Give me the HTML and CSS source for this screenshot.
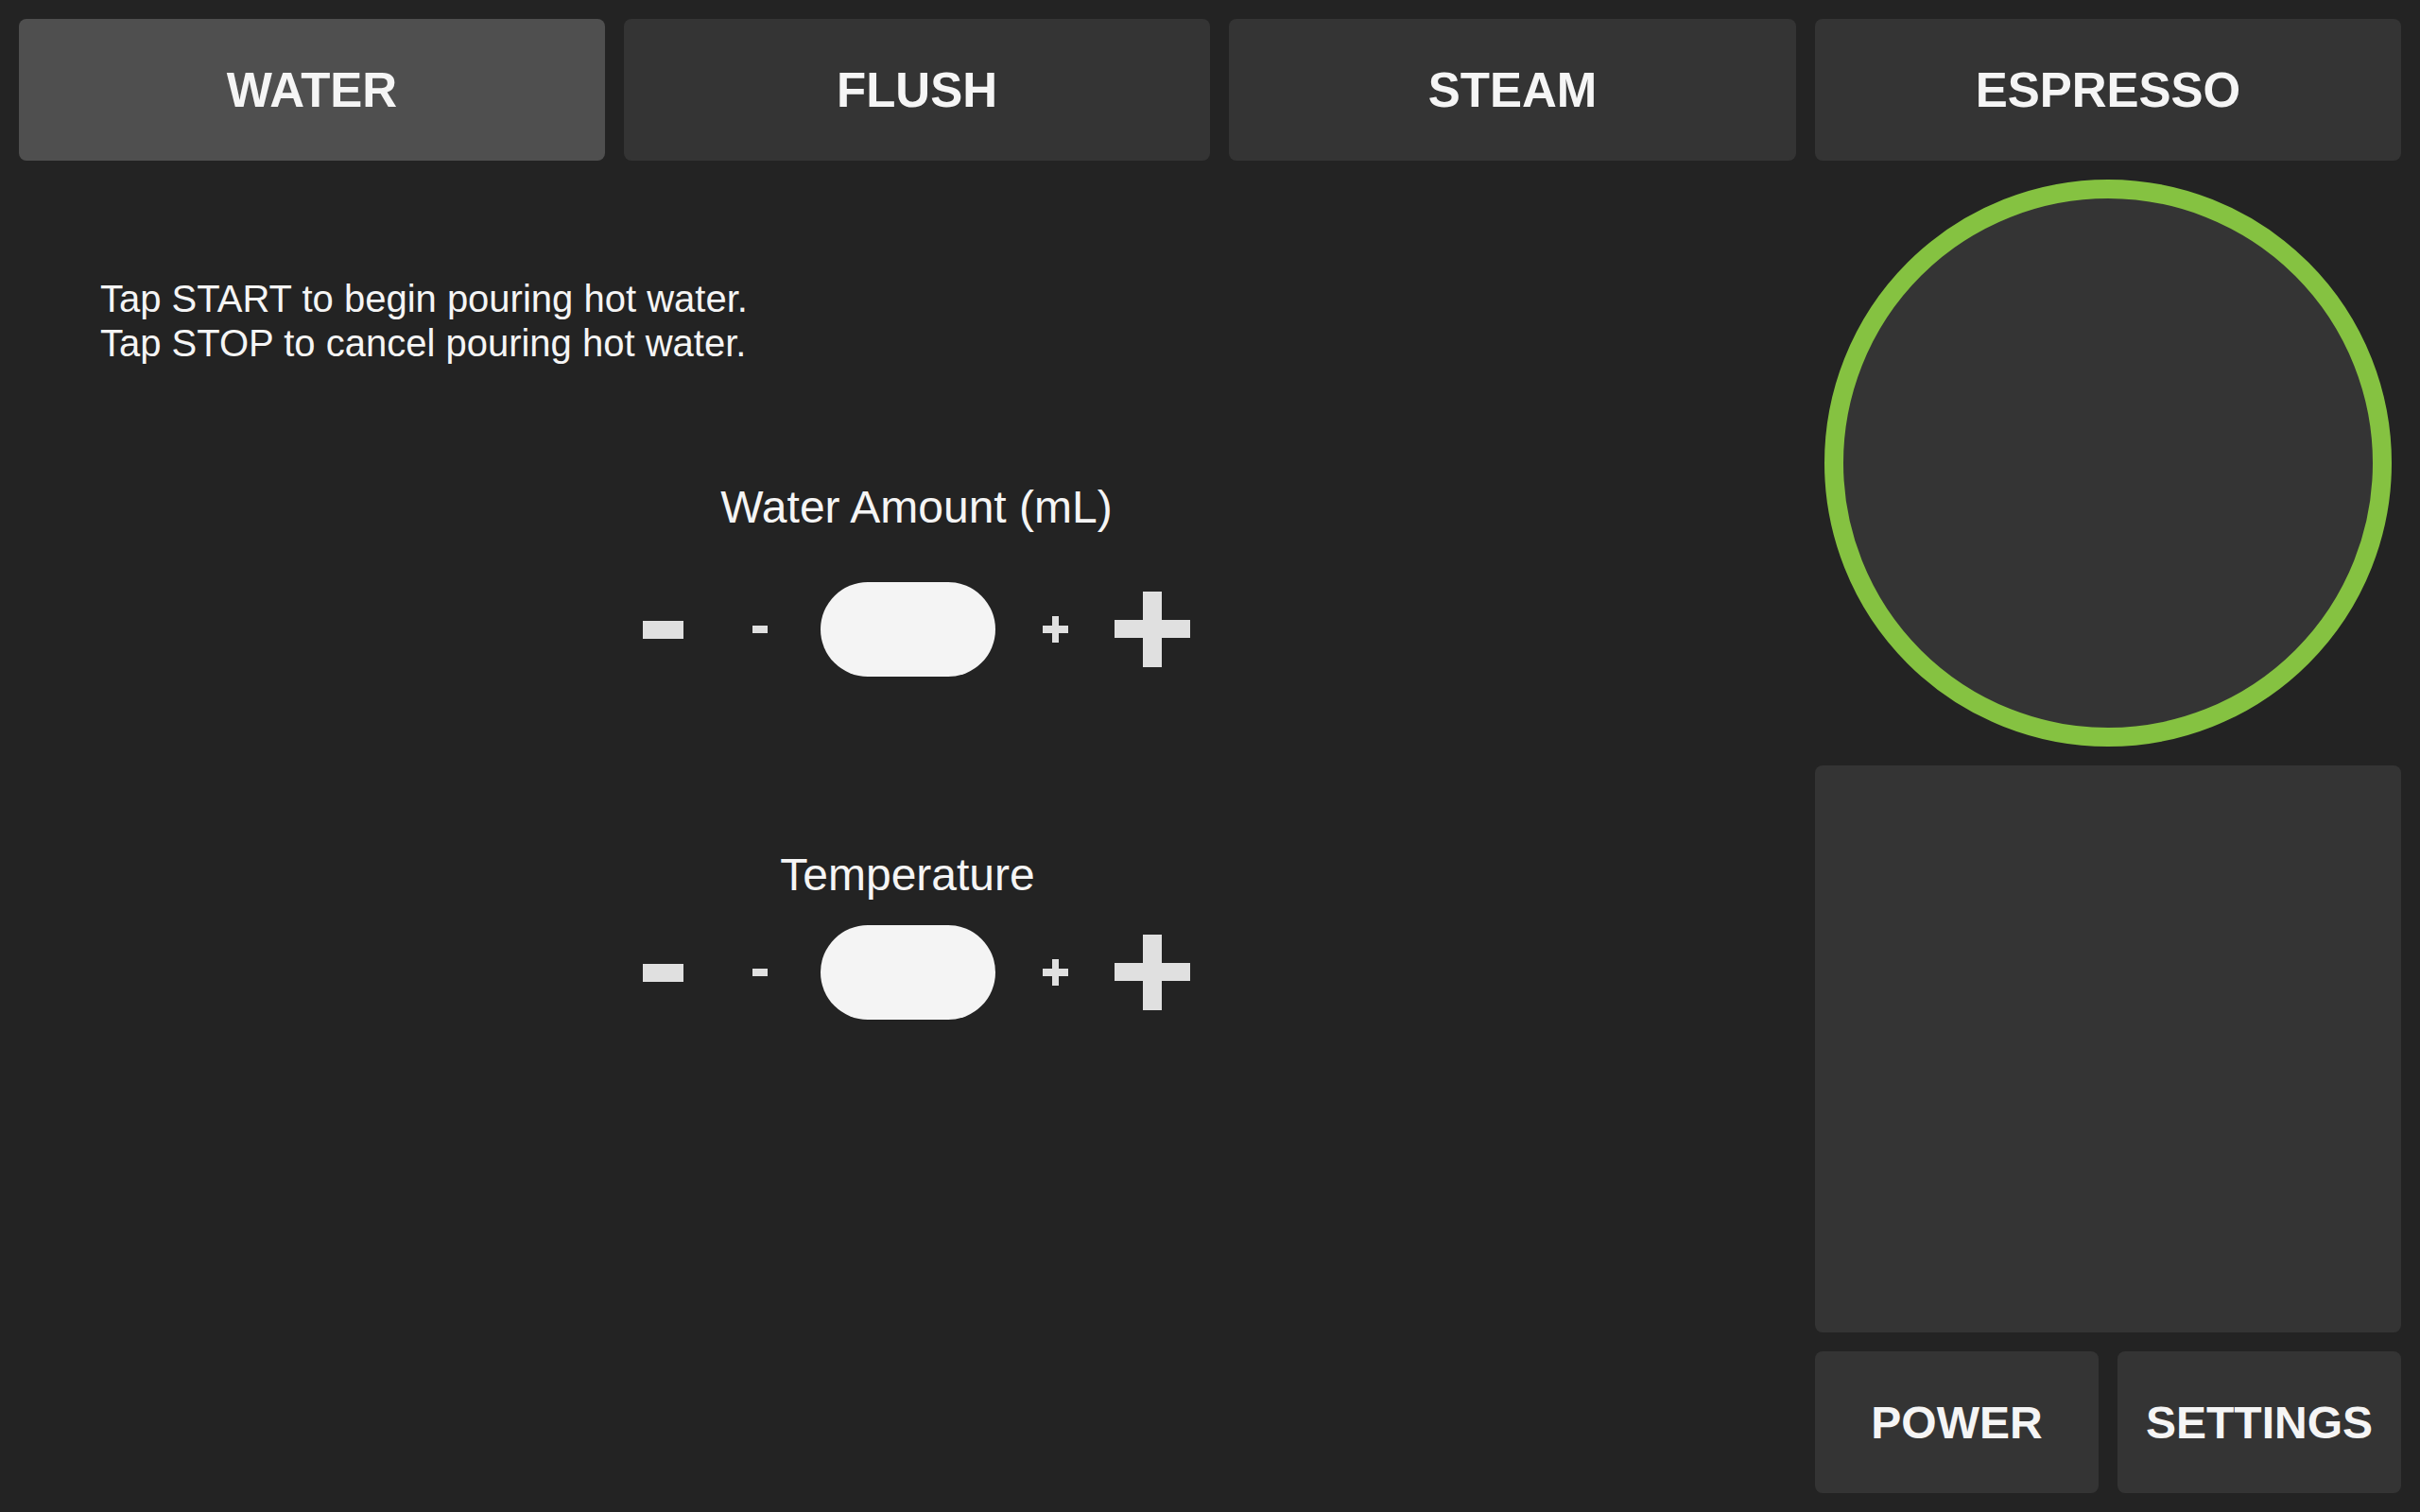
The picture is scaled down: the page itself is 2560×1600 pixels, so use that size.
FILE: index.html
```html
<!DOCTYPE html>
<html lang="en">
<head>
<meta charset="utf-8">
<title>Water</title>
<link rel="stylesheet" href="styles.css">
</head>
<body>
<div class="app">
  <nav class="tabs">
    <button class="tab tab--active">WATER</button>
    <button class="tab">FLUSH</button>
    <button class="tab">STEAM</button>
    <button class="tab">ESPRESSO</button>
  </nav>

  <section class="left">
    <p class="hint">Tap START to begin pouring hot water.<br>Tap STOP to cancel pouring hot water.</p>

    <div class="control control--water">
      <div class="control__label control__label--shift">Water Amount (mL)</div>
      <div class="stepper">
        <button class="step step--big" aria-label="decrease a lot"><span class="minus minus--big"></span></button>
        <button class="step" aria-label="decrease"><span class="minus minus--small"></span></button>
        <div class="pill"></div>
        <button class="step" aria-label="increase"><span class="plus plus--small"></span></button>
        <button class="step step--big" aria-label="increase a lot"><span class="plus plus--big"></span></button>
      </div>
    </div>

    <div class="control control--temp">
      <div class="control__label">Temperature</div>
      <div class="stepper">
        <button class="step step--big" aria-label="decrease a lot"><span class="minus minus--big"></span></button>
        <button class="step" aria-label="decrease"><span class="minus minus--small"></span></button>
        <div class="pill"></div>
        <button class="step" aria-label="increase"><span class="plus plus--small"></span></button>
        <button class="step step--big" aria-label="increase a lot"><span class="plus plus--big"></span></button>
      </div>
    </div>
  </section>

  <aside class="side">
    <div class="gauge"></div>
    <div class="panel"></div>
    <div class="actions">
      <button class="action">POWER</button>
      <button class="action">SETTINGS</button>
    </div>
  </aside>
</div>
</body>
</html>
```

FILE: styles.css
```css
* {
  box-sizing: border-box;
}

html, body {
  margin: 0;
  padding: 0;
  background: #232323;
}

body {
  font-family: "Liberation Sans", Arial, sans-serif;
  color: #f5f5f5;
}

button {
  font-family: inherit;
  border: none;
  padding: 0;
  margin: 0;
  color: inherit;
  background: none;
}

.app {
  width: 2560px;
  height: 1600px;
  padding: 20px;
  display: grid;
  grid-template-columns: 1880px 620px;
  grid-template-rows: 150px 1fr;
  column-gap: 20px;
  row-gap: 20px;
}

.tabs {
  grid-column: 1 / 3;
  display: grid;
  grid-template-columns: 620px 620px 600px 620px;
  column-gap: 20px;
}

.tab {
  background: #343434;
  border-radius: 8px;
  font-size: 51px;
  font-weight: bold;
  color: #f5f5f5;
  display: flex;
  align-items: center;
  justify-content: center;
}

.tab--active {
  background: #4f4f4f;
}

.left {
  display: flex;
  flex-direction: column;
  padding-top: 103px;
}

.hint {
  margin: 0;
  padding-left: 86px;
  font-size: 40px;
  line-height: 47px;
  color: #f5f5f5;
}

.control {
  display: flex;
  flex-direction: column;
  align-items: center;
}

.control--water {
  margin-top: 122px;
}

.control--temp {
  margin-top: 182px;
}

.control__label {
  font-size: 48px;
  line-height: 55px;
  color: #f5f5f5;
}

.control__label--shift {
  padding-left: 19px;
}

.control--water .stepper {
  margin-top: 52px;
}

.control--temp .stepper {
  margin-top: 26px;
}

.stepper {
  display: flex;
  align-items: center;
  gap: 14px;
}

.step {
  width: 100px;
  height: 100px;
  display: flex;
  align-items: center;
  justify-content: center;
  position: relative;
}

.step--big {
  width: 104px;
}

.stepper .step:nth-child(1) {
  margin-right: -14px;
}

.stepper .step:nth-child(5) {
  margin-left: -14px;
}

.pill {
  width: 185px;
  height: 100px;
  border-radius: 50px;
  background: #f4f4f4;
}

.minus {
  display: block;
  background: #e0e0e0;
}

.minus--big {
  width: 43px;
  height: 19px;
}

.minus--small {
  width: 16px;
  height: 8px;
}

.plus {
  display: block;
  position: relative;
}

.plus::before,
.plus::after {
  content: "";
  position: absolute;
  background: #e0e0e0;
}

.plus--big {
  width: 80px;
  height: 80px;
}

.plus--big::before {
  left: 0;
  top: 30px;
  width: 80px;
  height: 19px;
}

.plus--big::after {
  left: 30px;
  top: 0;
  width: 20px;
  height: 80px;
}

.plus--small {
  width: 27px;
  height: 28px;
}

.plus--small::before {
  left: 0;
  top: 10px;
  width: 27px;
  height: 8px;
}

.plus--small::after {
  left: 10px;
  top: 0;
  width: 7px;
  height: 28px;
}

.side {
  display: flex;
  flex-direction: column;
  gap: 20px;
}

.gauge {
  width: 600px;
  height: 600px;
  align-self: center;
  border-radius: 50%;
  border: 20px solid #85c241;
  background: #343434;
}

.panel {
  height: 600px;
  background: #343434;
  border-radius: 8px;
}

.actions {
  height: 150px;
  display: grid;
  grid-template-columns: 1fr 1fr;
  column-gap: 20px;
}

.action {
  background: #343434;
  border-radius: 8px;
  font-size: 48px;
  font-weight: bold;
  color: #f5f5f5;
  display: flex;
  align-items: center;
  justify-content: center;
}
```
